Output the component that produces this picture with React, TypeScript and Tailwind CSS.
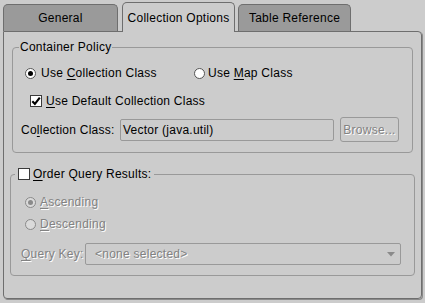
import type { ReactNode } from 'react';

// ─── little swing-look controls ──────────────────────────────────────────────

const dim = 'text-[#828282] [text-shadow:1px_1px_0_#ffffff]';

const U = ({ children }: { children: ReactNode }) => (
  <span className="underline decoration-1 underline-offset-[2px]">{children}</span>
);

const Radio = ({ checked, disabled }: { checked?: boolean; disabled?: boolean }) => (
  <span
    className={`flex h-[11px] w-[11px] shrink-0 items-center justify-center rounded-full border ${
      disabled ? 'border-[#8a8a8a] bg-[#dadada]' : 'border-[#555555] bg-white'
    }`}
  >
    {checked && <span className={`h-[5px] w-[5px] rounded-full ${disabled ? 'bg-[#8a8a8a]' : 'bg-black'}`} />}
  </span>
);

const Check = ({ checked }: { checked?: boolean }) => (
  <span className="flex h-[12px] w-[12px] shrink-0 items-center justify-center border border-[#3a3a3a] bg-white">
    {checked && (
      <svg viewBox="0 0 10 10" className="h-[10px] w-[10px]">
        <path d="M1.3 5.2 L3.9 7.8 L8.8 1.6" fill="none" stroke="#000" strokeWidth="2.1" />
      </svg>
    )}
  </span>
);

const Tab = ({ label, active }: { label: string; active?: boolean }) => (
  <div
    className={`flex items-center justify-center rounded-t-[5px] border border-b-0 border-[#6e6e6e] ${
      active ? 'relative z-10 -mb-[1px] h-[30px] w-[113px] bg-[#cccccc]' : 'h-[27px] bg-[#9a9a9a]'
    }`}
  >
    {label}
  </div>
);

// ─── App ─────────────────────────────────────────────────────────────────────

export default function App() {
  return (
    <div className="h-[303px] w-[425px] overflow-hidden bg-[#cccccc] pl-[3px] pt-[3px] font-['Liberation_Sans',Arial,sans-serif] text-[12px] leading-[16px] tracking-[0.25px] text-black">
      <div className="flex h-[28px] items-end">
        <div className="w-[115px]">
          <Tab label="General" />
        </div>
        <div className="ml-[4px]">
          <Tab label="Collection Options" active />
        </div>
        <div className="ml-[3px] w-[113px]">
          <Tab label="Table Reference" />
        </div>
      </div>

      <div className="flex h-[268px] w-[419px] flex-col rounded-[4px] rounded-tl-none border border-[#6e6e6e] shadow-[1px_1px_0_#8a8a8a]">
        <fieldset className="mx-[8px] mt-[8px] rounded-[4px] border border-[#999999] px-0 pb-[10px]">
          <legend className="ml-[6px] px-[1px] leading-[14px]">Container Policy</legend>

          <div className="mt-[11px] flex h-[16px] items-center pl-[12px]">
            <div className="flex w-[169px] items-center gap-[5px]">
              <Radio checked />
              <span>
                Use <U>C</U>ollection Class
              </span>
            </div>
            <div className="flex items-center gap-[3px]">
              <Radio />
              <span>
                Use <U>M</U>ap Class
              </span>
            </div>
          </div>

          <div className="mt-[12px] flex h-[16px] items-center gap-[4px] pl-[17px]">
            <Check checked />
            <span>
              <U>U</U>se Default Collection Class
            </span>
          </div>

          <div className="mt-[8px] flex h-[25px] items-center pl-[8px]">
            <span className="w-[99px]">
              Co<U>l</U>lection Class:
            </span>
            <div className="flex h-[22px] w-[214px] items-center rounded-[2px] border border-[#999999] pl-[2px]">
              Vector (java.util)
            </div>
            <div
              className={`ml-[6px] flex h-[25px] w-[59px] items-center justify-center rounded-[3px] border border-[#999999] ${dim}`}
            >
              Browse...
            </div>
          </div>
        </fieldset>

        <fieldset className="mx-[6px] mt-[14px] rounded-[4px] border border-[#999999] px-0 pb-[10px]">
          <legend className="ml-[4px] flex items-center gap-[3px] px-[3px] leading-[14px]">
            <Check />
            <span>
              <U>O</U>rder Query Results:
            </span>
          </legend>

          <div className={`mt-[13px] flex h-[16px] items-center gap-[4px] pl-[14px] ${dim}`}>
            <Radio checked disabled />
            <span>
              <U>A</U>scending
            </span>
          </div>

          <div className={`mt-[6px] flex h-[16px] items-center gap-[4px] pl-[14px] ${dim}`}>
            <Radio disabled />
            <span>
              <U>D</U>escending
            </span>
          </div>

          <div className="mt-[11px] flex h-[22px] items-center pl-[10px]">
            <span className={`w-[64px] ${dim}`}>
              <U>Q</U>uery Key:
            </span>
            <div className="flex h-[22px] w-[316px] items-center justify-between rounded-[2px] border border-[#999999] pl-[9px] pr-[5px]">
              <span className={dim}>&lt;none selected&gt;</span>
              <svg viewBox="0 0 8 5" className="h-[5px] w-[8px]">
                <path d="M0 0 H8 L4 4.5 Z" fill="#8a8a8a" />
              </svg>
            </div>
          </div>
        </fieldset>
      </div>
    </div>
  );
}
